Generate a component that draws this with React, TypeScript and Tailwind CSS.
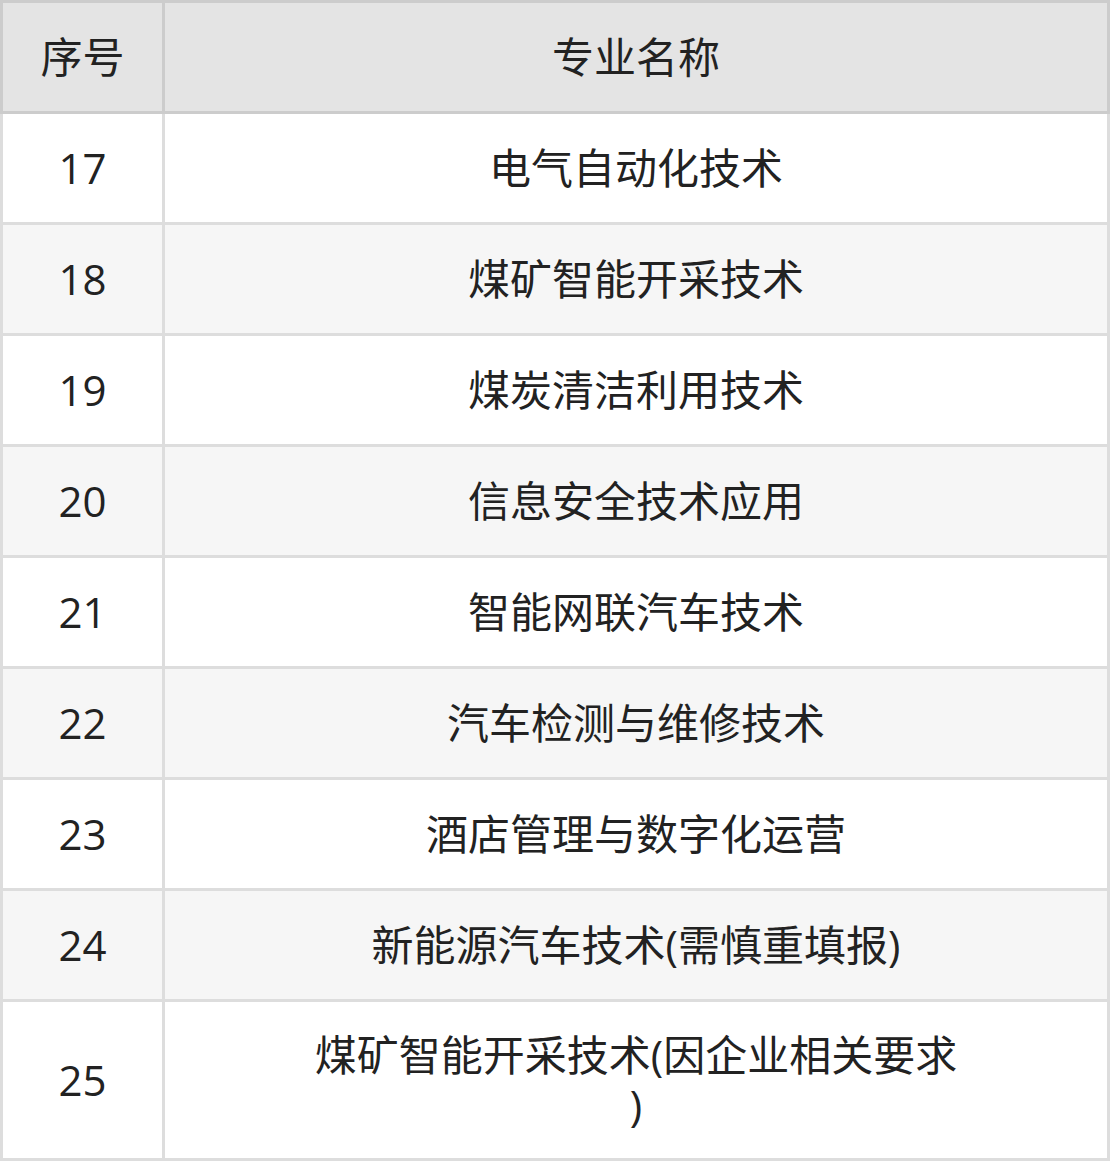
import React from 'react';

const rows: { no: string; name: React.ReactNode; tall?: boolean }[] = [
  { no: '17', name: '电气自动化技术' },
  { no: '18', name: '煤矿智能开采技术' },
  { no: '19', name: '煤炭清洁利用技术' },
  { no: '20', name: '信息安全技术应用' },
  { no: '21', name: '智能网联汽车技术' },
  { no: '22', name: '汽车检测与维修技术' },
  { no: '23', name: '酒店管理与数字化运营' },
  { no: '24', name: '新能源汽车技术(需慎重填报)' },
  {
    no: '25',
    name: (
      <>
        煤矿智能开采技术(因企业相关要求
        <br />)
      </>
    ),
    tall: true,
  },
];

export default function App() {
  return (
    <div
      className="w-[1110px] bg-white text-[42px] leading-[50px] text-[#222]"
      style={{ fontFamily: '"Open Sans", "Noto Sans CJK SC", sans-serif' }}
    >
      <div className="flex h-[114px] border-[3px] border-[#cccccc] bg-[#e4e4e4]">
        <div className="flex w-[159px] items-center justify-center">序号</div>
        <div className="flex flex-1 items-center justify-center border-l-[3px] border-[#cccccc]">
          专业名称
        </div>
      </div>
      {rows.map((row, i) => (
        <div
          key={row.no}
          className={`flex border-x-[3px] border-b-[3px] border-[#dddddd] ${
            row.tall ? 'h-[159px]' : 'h-[111px]'
          } ${i % 2 === 1 ? 'bg-[#f6f6f6]' : 'bg-white'}`}
        >
          <div className="flex w-[159px] items-center justify-center">{row.no}</div>
          <div className="flex flex-1 items-center justify-center border-l-[3px] border-[#dddddd] text-center">
            <div>{row.name}</div>
          </div>
        </div>
      ))}
    </div>
  );
}
